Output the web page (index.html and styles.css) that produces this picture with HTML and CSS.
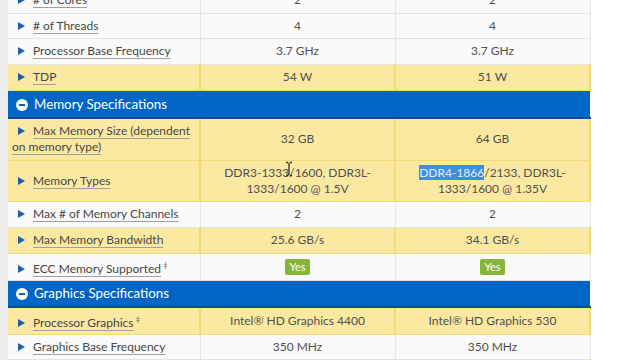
FILE: index.html
```html
<!DOCTYPE html>
<html>
<head>
<meta charset="utf-8">
<link rel="stylesheet" href="styles.css">
</head>
<body>
<div class="page">
  <table class="specs">
    <colgroup><col class="c-label"><col class="c-val"><col class="c-val"></colgroup>
    <tr class="row white h26"><td class="label"><span class="arrow"></span><span class="lt">#&nbsp;of Cores</span></td><td>2</td><td>2</td></tr>
    <tr class="row white h25"><td class="label"><span class="arrow"></span><span class="lt">#&nbsp;of Threads</span></td><td>4</td><td>4</td></tr>
    <tr class="row white h26"><td class="label"><span class="arrow"></span><span class="lt">Processor Base Frequency</span></td><td>3.7 GHz</td><td>3.7 GHz</td></tr>
    <tr class="row yellow h26"><td class="label"><span class="arrow"></span><span class="lt">TDP</span></td><td>54 W</td><td>51 W</td></tr>
    <tr class="section h28"><td colspan="3"><span class="minus"></span>Memory Specifications</td></tr>
    <tr class="row yellow h42"><td class="label"><span class="arrow"></span><span class="lt">Max Memory Size (dependent on memory type)</span></td><td>32 GB</td><td>64 GB</td></tr>
    <tr class="row yellow h41"><td class="label"><span class="arrow"></span><span class="lt">Memory Types</span></td><td>DDR3-1333<span class="cursor-anchor"><svg class="ibeam" width="8" height="16" viewBox="0 0 8 16"><path d="M1 1.5h2.2M4.8 1.5H7M4 2v12M1 14.5h2.2M4.8 14.5H7" stroke="#333" stroke-width="1.3" fill="none"/></svg></span>/1600, DDR3L-<br>1333/1600 @ 1.5V</td><td><span class="sel">DDR4-1866</span>/2133, DDR3L-<br>1333/1600 @ 1.35V</td></tr>
    <tr class="row white h26"><td class="label"><span class="arrow"></span><span class="lt">Max #&nbsp;of Memory Channels</span></td><td>2</td><td>2</td></tr>
    <tr class="row yellow h26"><td class="label"><span class="arrow"></span><span class="lt">Max Memory Bandwidth</span></td><td>25.6 GB/s</td><td>34.1 GB/s</td></tr>
    <tr class="row white h27"><td class="label"><span class="arrow"></span><span class="lt">ECC Memory Supported</span><sup class="dag">‡</sup></td><td><span class="yes">Yes</span></td><td><span class="yes">Yes</span></td></tr>
    <tr class="section h27"><td colspan="3"><span class="minus"></span>Graphics Specifications</td></tr>
    <tr class="row yellow h27"><td class="label"><span class="arrow"></span><span class="lt">Processor Graphics</span><sup class="dag">‡</sup></td><td>Intel® HD Graphics 4400</td><td>Intel® HD Graphics 530</td></tr>
    <tr class="row white h25"><td class="label"><span class="arrow"></span><span class="lt">Graphics Base Frequency</span></td><td>350 MHz</td><td>350 MHz</td></tr>
    <tr class="row yellow h26"><td class="label"><span class="arrow"></span><span class="lt">Graphics Max Dynamic Frequency</span></td><td>1.15 GHz</td><td>1.15 GHz</td></tr>
  </table>
</div>
</body>
</html>
```
FILE: styles.css
```css
html, body {
  margin: 0;
  padding: 0;
  background: #ffffff;
  overflow: hidden;
}
.page {
  width: 640px;
  height: 360px;
  overflow: hidden;
  background: linear-gradient(to right, #ededed 0, #ededed 8px, #ffffff 8px);
}
.specs {
  margin-top: -13px;
  margin-left: 8px;
  width: 581px;
  border-collapse: collapse;
  table-layout: fixed;
  font-family: Lato, "Open Sans", sans-serif;
  font-size: 12px;
  color: #505050;
}
.c-label { width: 192px; }
.c-val { width: 195px; }
.specs td {
  padding: 0;
  text-align: center;
  vertical-align: middle;
  line-height: 16px;
}
.row.white td {
  background: #fafafa;
  border-bottom: 1px solid #e4e4e4;
  border-right: 1px solid #e6e6e6;
}
.row.yellow td {
  background: #fbe9a2;
  border-bottom: 1px solid #f3da7c;
  border-right: 2px solid #f4d978;
}
.specs td.label {
  text-align: left;
  padding-left: 4px;
  padding-right: 1px;
  color: #474747;
  font-size: 12px;
}
.arrow {
  display: inline-block;
  width: 0;
  height: 0;
  border-top: 4px solid transparent;
  border-bottom: 4px solid transparent;
  border-left: 7px solid #1f5fa8;
  margin-left: 6px;
  margin-right: 8px;
  vertical-align: 0;
}
.lt {
  text-decoration: underline solid #a0a0a0;
  text-underline-offset: 3px;
}
.dag {
  font-size: 8px;
  margin-left: 2px;
  color: #666;
}
.section td {
  background: #0066c6;
  color: #fff;
  text-align: left;
  padding-left: 7px;
  font-size: 13.3px;
  border-bottom: 2px solid #0a4f94;
}
.minus {
  display: inline-block;
  width: 12px;
  height: 12px;
  border-radius: 50%;
  background: #fff;
  position: relative;
  vertical-align: -2px;
  margin-left: 1px;
  margin-right: 6px;
}
.minus::after {
  content: "";
  position: absolute;
  left: 3px;
  top: 5px;
  width: 6px;
  height: 2px;
  background: #0066c6;
}
.h25 { height: 25px; }
.h26 { height: 26px; }
.h27 { height: 27px; }
.h28 { height: 28px; }
.h41 { height: 41px; }
.h42 { height: 42px; }
.sel {
  background: #3d8ee0;
  color: #e8f0ff;
}
.cursor-anchor {
  position: relative;
  display: inline-block;
  width: 0;
  height: 12px;
}
.ibeam {
  position: absolute;
  left: -4px;
  top: -4px;
}
.yes {
  display: inline-block;
  background: #86b53a;
  color: #fff;
  font-size: 11px;
  line-height: 16px;
  padding: 0 4px;
  border-radius: 2px;
}
```
